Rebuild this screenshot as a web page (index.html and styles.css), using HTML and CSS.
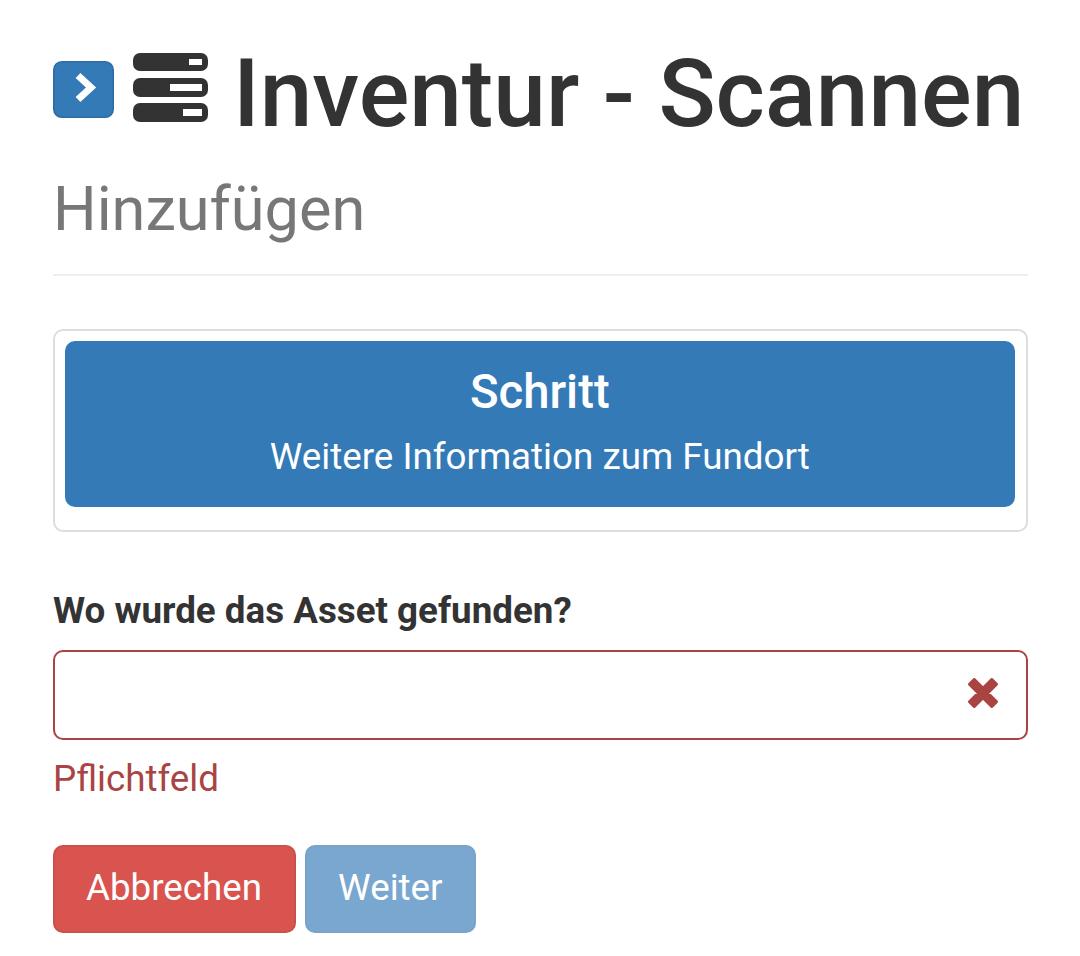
FILE: index.html
```html
<!DOCTYPE html>
<html lang="de">
<head>
<meta charset="utf-8">
<title>Inventur - Scannen</title>
<link rel="stylesheet" href="styles.css">
</head>
<body>
<header class="page-header">
  <h1 class="title">
    <span class="toggle"><svg viewBox="0 0 61 57" width="61" height="57"><rect x="0.800" y="0.800" width="59.400" height="55.400" rx="8" fill="#337ab7" stroke="#2e6da4" stroke-width="1.600"/><path d="M25 14.500 L38 26.500 L25 38.500" fill="none" stroke="#fff" stroke-width="7" stroke-linecap="butt" stroke-linejoin="miter"/></svg></span>
    <svg class="server" viewBox="0 0 75 69" width="75" height="69"><rect x="0" y="0" width="75" height="18" rx="7" fill="#333"/><rect x="56" y="6" width="13" height="6" fill="#fff"/><rect x="0" y="25" width="75" height="19" rx="7" fill="#333"/><rect x="37" y="31" width="32" height="7" fill="#fff"/><rect x="0" y="50" width="75" height="19" rx="7" fill="#333"/><rect x="50" y="56" width="19" height="7" fill="#fff"/></svg>
    <span class="title-text">Inventur - Scannen</span>
  </h1>
  <div class="subtitle">Hinzufügen</div>
</header>
<section class="panel">
  <div class="step">
    <h3 class="step-title">Schritt</h3>
    <p class="step-text">Weitere Information zum Fundort</p>
  </div>
</section>
<form class="form">
  <label class="label" for="fundort">Wo wurde das Asset gefunden?</label>
  <div class="field">
    <input class="input" id="fundort" type="text">
    <svg class="x" viewBox="0 0 32 32" width="40" height="40"><path d="M5 9 L9 5 L16 12 L23 5 L27 9 L20 16 L27 23 L23 27 L16 20 L9 27 L5 23 L12 16 Z" fill="#a94442" stroke="#a94442" stroke-width="2" stroke-linejoin="round"/></svg>
  </div>
  <div class="help">Pflichtfeld</div>
  <div class="actions">
    <button class="btn btn-danger" type="button">Abbrechen</button>
    <button class="btn btn-primary" type="button">Weiter</button>
  </div>
</form>
</body>
</html>
```
FILE: styles.css
```css
* { box-sizing: border-box; }
html, body { margin: 0; background: #fff; }
body {
  padding: 0 52px 0 53px;
  font-family: Roboto, "Liberation Sans", sans-serif;
  font-size: 36.750px;
  line-height: 52px;
  color: #333;
}
.page-header {
  padding-top: 42px;
  height: 276px;
  border-bottom: 2px solid #eee;
}
.title {
  margin: 0;
  display: flex;
  align-items: center;
  font-size: 94.500px;
  font-weight: 500;
  line-height: 104px;
  white-space: nowrap;
}
.toggle { display: flex; margin-top: -9px; }
.server { margin: -13px 0 0 19px; }
.title-text { margin-left: 25px; }
.subtitle {
  margin-top: 29px;
  font-size: 61.250px;
  line-height: 68px;
  color: #777;
}
.panel {
  margin-top: 53px;
  padding: 10px 11px 10px 9.500px;
  height: 203px;
  border: 2.500px solid #ddd;
  border-radius: 10px;
}
.step {
  height: 166px;
  padding-top: 25px;
  background: #337ab7;
  border-radius: 10px;
  color: #fff;
  text-align: center;
}
.step-title {
  margin: 0;
  font-size: 47.250px;
  line-height: 52px;
  font-weight: 500;
}
.step-text {
  margin: 13px 0 0;
  line-height: 52px;
}
.form { margin-top: 53px; }
.label {
  display: block;
  font-weight: 700;
  color: #333;
}
.field { position: relative; margin-top: 13px; }
.input {
  display: block;
  width: 100%;
  height: 90px;
  border: 2.500px solid #a94442;
  border-radius: 10px;
  background: #fff;
  outline: none;
}
.x { position: absolute; right: 25px; top: 23px; }
.help {
  margin-top: 13px;
  color: #a94442;
}
.actions {
  display: flex;
  gap: 9px;
  margin-top: 40px;
}
.btn {
  height: 88px;
  padding: 0 31px 2px;
  border: 2.500px solid transparent;
  border-radius: 10px;
  font: inherit;
  color: #fff;
}
.btn-danger { padding-right: 32px; background: #d9534f; border-color: #c9504c; }
.btn-primary { background: #7aa7cf; border-color: #7aa3c8; }
```
